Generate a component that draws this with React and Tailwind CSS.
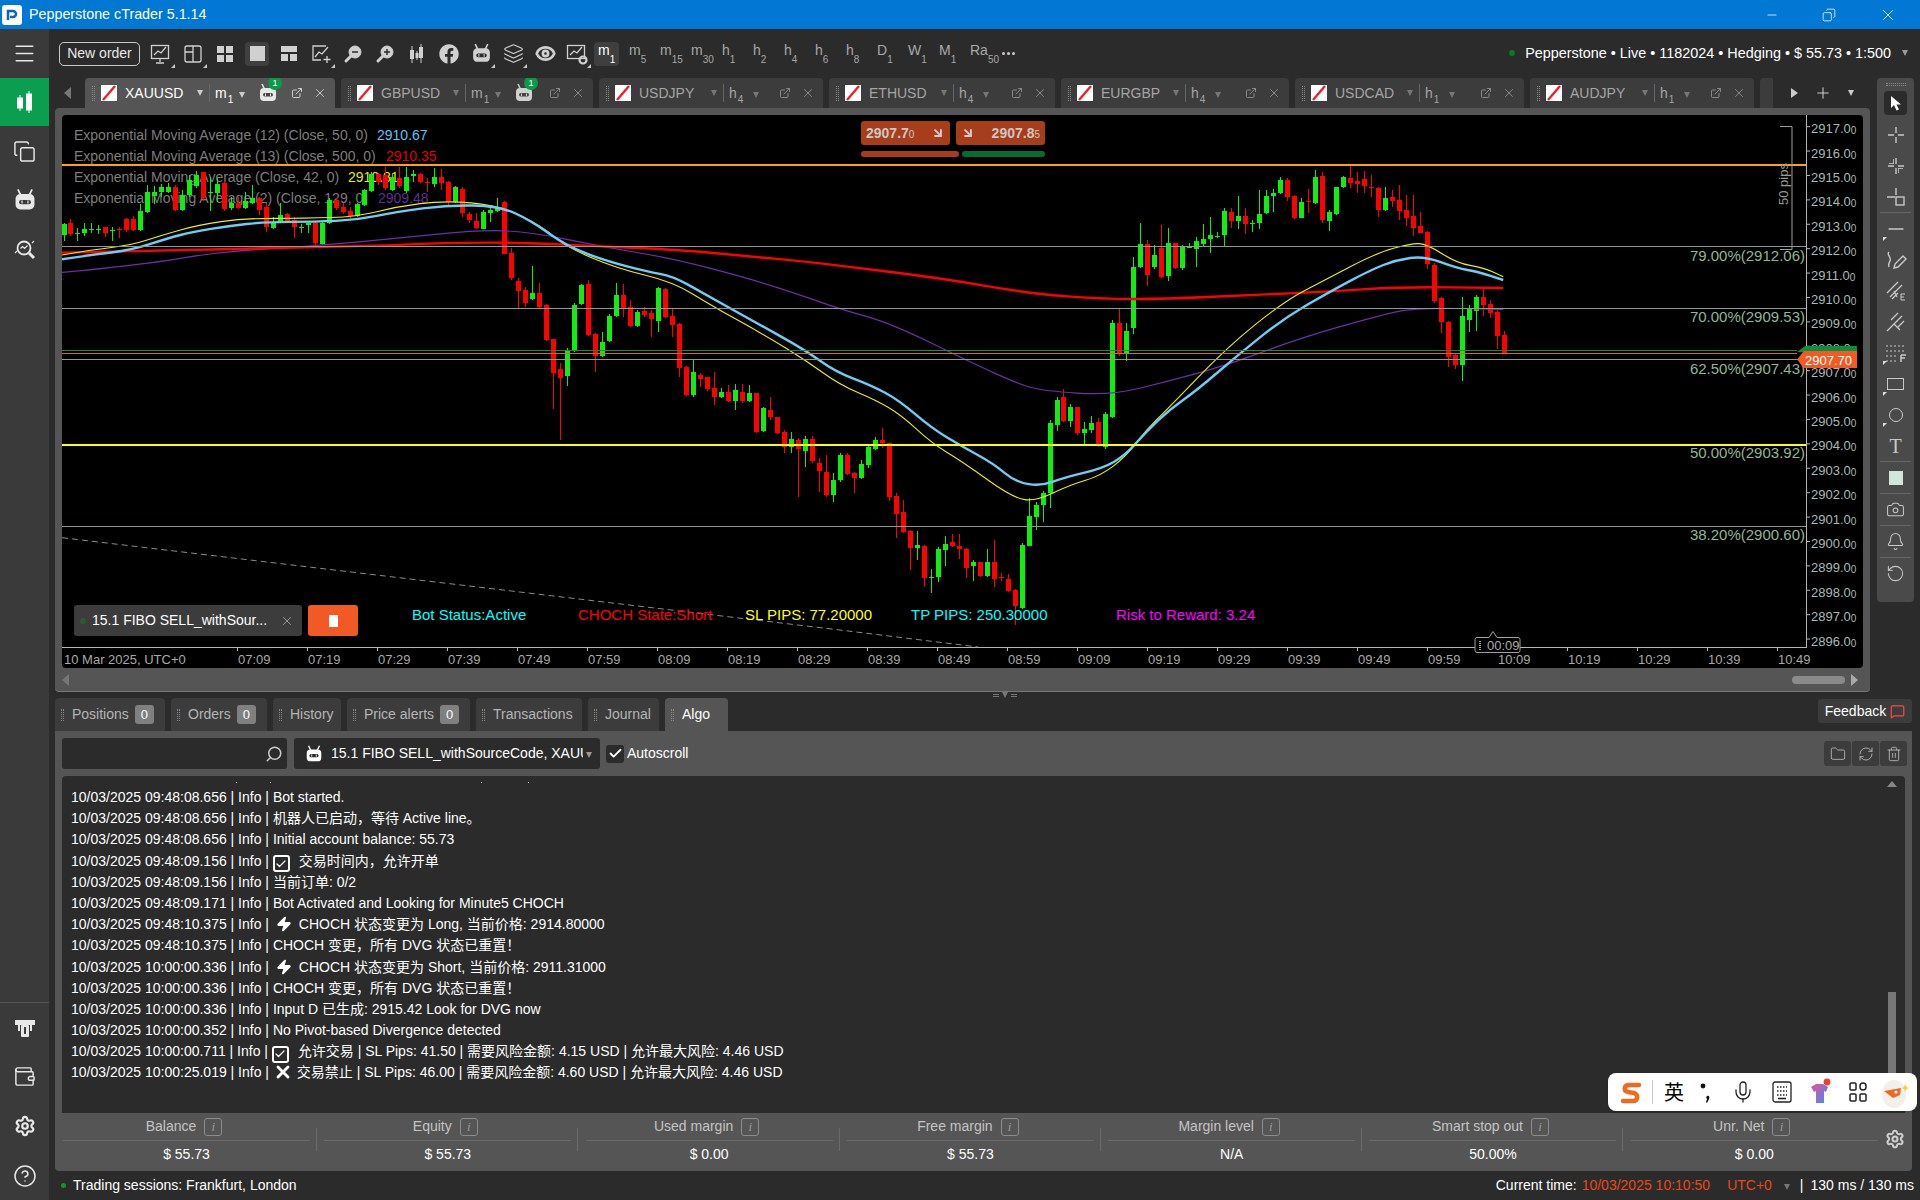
import React from 'react';
import { Menu, Copy, Settings, CircleHelp, Layers, Eye, Folder, RefreshCw, Trash2, Plus, Minus, X, Check, Zap, Mic, Camera, Bell, RotateCcw, ExternalLink, Search, Wallet, MessageSquare, ArrowDownRight } from 'lucide-react';
import { FaFacebook } from 'react-icons/fa';

const g = (t, b, h, l) => ['#0fef0f', t, b, h, l];
const r = (t, b, h, l) => ['#ff0000', t, b, h, l];

// body top, body bottom, high, low - read off the chart, one unit is 1/3 px
const candles = [
  g(342,375,340,392), r(340,372,327,378), g(370,373,355,392), g(358,370,340,378), g(357,359,338,368), g(356,358,345,372), r(352,368,350,382), g(360,363,350,392), r(358,360,350,385), r(327,360,325,367),
  r(326,360,318,364), g(303,360,283,362), g(247,305,225,310), g(245,258,228,282), g(232,245,222,260), g(232,245,220,250), r(232,300,225,302), g(255,300,240,302), g(210,256,195,262), g(195,228,182,235),
  r(187,265,185,272), g(245,250,200,302), g(222,250,205,275), r(218,296,212,303), g(280,295,262,300), r(278,295,262,298), g(272,295,245,298), g(265,278,225,282), r(265,300,262,315), r(292,350,278,365),
  g(336,355,320,358), g(315,335,280,340), r(312,335,310,338), r(330,352,320,385), g(350,352,342,370), g(340,345,335,368), r(340,398,332,408), g(340,402,335,405), g(270,338,265,342), r(270,295,265,300),
  r(291,305,280,312), r(302,318,290,325), g(282,318,278,322), g(240,285,236,288), g(192,243,185,245), r(192,215,188,225), r(195,235,170,240), g(200,240,190,242), r(203,228,170,235), g(202,243,172,248),
  g(192,198,180,215), r(192,215,188,220), r(215,220,205,245), g(202,222,175,232), r(202,220,178,240), r(215,275,212,290), g(232,275,228,280), r(236,308,232,322), r(312,330,305,338), r(332,355,310,358),
  g(306,357,300,358), g(300,310,290,335), g(292,302,265,305), r(276,431,274,432), r(430,505,415,510), r(512,542,505,595), r(540,580,530,590), g(548,567,468,570), r(550,590,520,595), r(585,690,583,692),
  r(688,790,686,896), r(778,803,760,990), g(722,798,715,828), g(585,722,580,725), g(525,582,522,585), r(522,675,510,678), r(672,737,670,785), g(697,737,665,740), g(618,693,612,697), g(556,618,520,620),
  r(556,595,522,620), r(590,647,570,650), g(606,648,600,650), r(603,615,592,620), r(610,628,600,680), g(535,632,530,665), r(537,620,535,625), r(618,645,597,680), r(642,775,640,802), r(770,855,768,858),
  g(785,855,750,860), r(796,808,790,830), r(802,838,800,842), r(835,860,785,885), g(846,860,835,865), r(847,872,825,875), g(840,872,822,900), r(845,872,822,878), g(850,872,824,875), r(850,965,848,968),
  g(895,963,890,965), r(900,920,860,930), r(922,970,920,972), r(967,1010,960,1030), g(987,1010,967,1030), r(990,1018,985,1160), g(987,1022,978,1070), r(987,1053,978,1058), r(1060,1083,1045,1145), r(1087,1155,1035,1160),
  g(1110,1155,1090,1175), g(1035,1110,1030,1115), r(1035,1092,1030,1095), r(1090,1103,1085,1150), g(1063,1105,1050,1108), g(1010,1065,1005,1075), g(990,1017,980,1020), r(990,1000,955,1015), r(1000,1160,998,1173), r(1158,1212,1150,1285),
  r(1205,1265,1170,1268), r(1263,1313,1260,1380), g(1306,1313,1263,1350), r(1308,1403,1306,1430), g(1402,1403,1377,1450), g(1317,1400,1312,1415), g(1302,1320,1278,1367), r(1297,1307,1272,1310), r(1307,1317,1272,1348), r(1317,1373,1315,1405),
  g(1357,1367,1350,1413), r(1357,1398,1355,1400), g(1357,1398,1317,1402), r(1357,1408,1290,1430), r(1402,1403,1388,1412), r(1408,1442,1392,1445), r(1440,1488,1438,1545), g(1305,1495,1298,1497), g(1218,1307,1165,1309), g(1186,1220,1175,1259),
  g(1150,1185,1142,1235), g(938,1150,930,1193), g(870,945,862,962), r(860,932,838,936), g(890,932,882,950), r(892,970,890,975), g(957,970,935,1002), g(940,960,918,968), r(935,1005,925,1010), g(912,1010,905,1016),
  g(640,920,630,925), r(640,730,595,737), g(663,730,640,752), g(472,653,440,673), g(402,472,340,475), r(402,495,390,527), g(435,472,405,478), r(413,500,345,503), g(400,497,355,512), r(400,473,398,478),
  g(412,473,405,480), g(410,412,400,415), g(393,417,380,470), g(388,402,342,408), g(375,387,322,430), g(378,380,365,385), g(303,375,295,410), r(306,333,295,355), g(318,333,258,358), r(318,342,295,372),
  g(340,341,330,365), g(312,340,240,358), g(258,308,240,312), g(248,258,238,305), g(210,250,200,252), r(210,260,205,272), r(258,323,255,328), g(276,323,265,325), r(273,274,238,310), g(201,279,180,281),
  r(198,330,185,340), g(306,333,300,362), g(231,312,230,315), g(201,231,198,234), r(204,218,168,235), r(213,221,185,250), r(207,228,182,250), r(232,234,195,260), r(234,300,230,322), g(264,300,232,302),
  r(261,273,240,290), r(270,303,225,330), r(300,323,255,348), r(318,353,256,378), r(348,369,305,370), r(366,462,364,478), r(465,573,458,580), r(564,636,560,668), r(636,741,632,770), r(735,765,730,777),
  g(618,765,562,812), g(597,630,585,665), g(561,603,555,662), r(561,585,538,618), r(582,609,570,625), r(606,678,600,717), r(675,730,663,732),
];

const sx = (x0, z) => x0 + z * 0.5102;
const sy = (z) => 110 + z / 3;

// points come in two runs, left half and right half of the chart
const line = (a, b) => {
  const p = [...a.map(([x, y]) => [sx(40, x), sy(y)]), ...b.map(([x, y]) => [sx(840, x), sy(y)])];
  let d = `M${p[0][0]} ${p[0][1]}`;
  for (let i = 1; i < p.length - 1; i++) {
    const mx = (p[i][0] + p[i + 1][0]) / 2;
    const my = (p[i][1] + p[i + 1][1]) / 2;
    d += `Q${p[i][0]} ${p[i][1]} ${mx} ${my}`;
  }
  const e = p[p.length - 1];
  return `${d}L${e[0]} ${e[1]}`;
};

const emaBlue = line(
  [[43,448],[100,435],[180,420],[250,385],[300,365],[370,348],[440,336],[540,335],[620,330],[700,305],[800,285],[900,288],[960,330],[1020,395],[1060,425],[1115,455],[1190,485],[1240,498],[1300,550],[1400,635],[1500,720]],
  [[-10,785],[60,825],[115,870],[180,955],[240,1010],[300,1060],[345,1117],[395,1128],[440,1102],[515,1075],[560,1035],[600,965],[645,900],[700,840],[780,735],[870,625],[960,545],[1040,480],[1090,450],[1145,438],[1210,475],[1250,485],[1300,510]]
);
const emaYellow = line(
  [[43,435],[100,420],[180,405],[240,375],[310,345],[400,325],[520,325],[620,320],[700,290],[790,272],[900,285],[985,350],[1030,410],[1130,475],[1240,515],[1320,590],[1420,675],[1500,750]],
  [[0,825],[70,870],[120,915],[180,1000],[240,1055],[340,1165],[385,1173],[450,1125],[510,1098],[560,1040],[600,960],[640,900],[760,710],[870,575],[950,510],[1050,430],[1120,400],[1150,402],[1210,460],[1260,472],[1300,500]]
);
const emaRed = line(
  [[43,428],[220,422],[540,412],[700,405],[800,398],[960,398],[1100,410],[1240,418],[1400,440],[1500,455]],
  [[0,467],[200,505],[370,550],[510,567],[640,567],[800,555],[960,545],[1100,530],[1300,534]]
);
const emaPurple = line(
  [[43,487],[200,465],[350,425],[540,408],[700,385],[860,360],[960,365],[1100,410],[1240,445],[1400,510],[1500,560]],
  [[0,597],[100,640],[260,760],[350,822],[400,843],[530,856],[640,815],[760,765],[900,685],[1060,615],[1130,593],[1300,598]]
);

const prices = Array.from({ length: 22 }, (_, i) => 2917 - i);
const times = ['07:09','07:19','07:29','07:39','07:49','07:59','08:09','08:19','08:29','08:39','08:49','08:59','09:09','09:19','09:29','09:39','09:49','09:59','10:09','10:19','10:29','10:39','10:49'];
const fibs = [
  { y: 246, c: '#8c9a94', label: '79.00%(2912.06)', ty: 261 },
  { y: 308, c: '#8c9a94', label: '70.00%(2909.53)', ty: 322 },
  { y: 359, c: '#8c9a94', label: '62.50%(2907.43)', ty: 374 },
  { y: 444, c: '#ffff00', label: '50.00%(2903.92)', ty: 458 },
  { y: 526, c: '#8c9a94', label: '38.20%(2900.60)', ty: 540 },
];

const legends = [
  ['Exponential Moving Average (12) (Close, 50, 0)', '2910.67', '#5cc4f5', 140, 377],
  ['Exponential Moving Average (13) (Close, 500, 0)', '2910.35', '#e00000', 161, 386],
  ['Exponential Moving Average (Close, 42, 0)', '2910.81', '#e8e800', 182, 348],
  ['Exponential Moving Average (2) (Close, 129, 0)', '2909.48', '#5b2e96', 203, 378],
];

const Chart = () => (
  <svg width="1801" height="553" viewBox="62 115 1801 553" className="block">
    {legends.map(([t, v, c, y, vx]) => (
      <g key={t} fontSize="14">
        <text x="74" y={y} fill="#7d7d7d">{t}</text>
        <text x={vx} y={y} fill={c}>{v}</text>
      </g>
    ))}
    <polyline points="62,537.7 840,630 978,647" fill="none" stroke="#8a8a8a" strokeDasharray="6 4" />
    <g shapeRendering="crispEdges">
      {candles.map(([c, t, b, h, l], i) => {
        const x = Math.round(63.5 + i * 6.993);
        return (
          <g key={i} fill={c}>
            <rect x={x} y={sy(h)} width="1" height={(l - h) / 3} />
            <rect x={x - 2} y={sy(t)} width="5" height={Math.max((b - t) / 3, 1)} />
          </g>
        );
      })}
    </g>
    <path d={emaPurple} fill="none" stroke="#6a30a8" strokeWidth="1.2" />
    <path d={emaRed} fill="none" stroke="#ff0000" strokeWidth="2.4" />
    <path d={emaYellow} fill="none" stroke="#f0f000" strokeWidth="1.1" />
    <path d={emaBlue} fill="none" stroke="#6fcdf5" strokeWidth="2.4" />
    <g shapeRendering="crispEdges">
      <rect x="62" y="163.5" width="1744" height="2" fill="#ffa500" />
      {fibs.map((f) => (
        <rect key={f.y} x="62" y={f.y} width="1744" height={f.c === '#ffff00' ? 2 : 1} fill={f.c} />
      ))}
      <rect x="62" y="350" width="1735" height="1" fill="#0b8f3c" />
      <rect x="62" y="353" width="1735" height="1" fill="#f15a24" />
      <rect x="1806" y="115" width="1" height="533" fill="#b5b5b5" />
      <rect x="62" y="647" width="1745" height="1" fill="#b5b5b5" />
    </g>
    {fibs.map((f) => (
      <text key={f.label} x="1805" y={f.ty} textAnchor="end" fontSize="15" fill="#8fb59a">{f.label}</text>
    ))}
    <path d="M1780 126.500h12v123h-12" fill="none" stroke="#9a9a9a" />
    <text transform="translate(1788 184) rotate(-90)" textAnchor="middle" fontSize="13" fill="#9a9a9a">50 pips</text>
    {prices.map((p) => {
      const y = 246.7 + (2912.06 - p) * 24.4;
      return (
        <g key={p}>
          <rect x="1807" y={y} width="3" height="1" fill="#b5b5b5" />
          <text x="1811" y={y + 7} fontSize="13" fill="#a9b8b8">
            {p}.0<tspan fontSize="10" dy="1">0</tspan>
          </text>
        </g>
      );
    })}
    <path d="M1797 352l8-6h52v10z" fill="#0b8f3c" />
    <path d="M1797 359.500l7-8.500h53v17h-53z" fill="#f15a24" />
    <text x="1805" y="364.500" fontSize="13" fill="#ffffff">2907.70</text>
    <text x="64" y="664" fontSize="13" fill="#a8a8a8">10 Mar 2025, UTC+0</text>
    {times.map((t, i) => (
      <g key={t}>
        <rect x={237 + i * 70} y="648" width="1" height="3" fill="#b5b5b5" />
        <text x={238 + i * 70} y="664" fontSize="13" fill="#a8a8a8">{t}</text>
      </g>
    ))}
    <path d="M1477 637.500h12l4-6 4 6h21a2 2 0 0 1 2 2v11a2 2 0 0 1-2 2h-41a2 2 0 0 1-2-2v-11a2 2 0 0 1 2-2z" fill="#000" stroke="#a0a0a0" />
    <path d="M1480 641v9" stroke="#a0a0a0" strokeDasharray="1 1" strokeWidth="2" />
    <text x="1487" y="650" fontSize="13" fill="#a8a8a8">00:09</text>
  </svg>
);

const Flag = () => (
  <svg width="16" height="16" viewBox="0 0 16 16" className="shrink-0">
    <rect width="16" height="16" fill="#fff" />
    <path d="M2 15 14 1" stroke="#e8212b" strokeWidth="2.4" />
  </svg>
);

const Caret = ({ c = 'border-t-[#999]' }) => (
  <span className={`inline-block w-0 h-0 border-l-[3.5px] border-r-[3.5px] border-t-[6px] border-l-transparent border-r-transparent ${c}`} />
);

const Grip = ({ h = 'h-[15px]' }) => (
  <span className={`w-[3px] ${h} border-x border-dotted border-[#888] shrink-0`} />
);

const BotIcon = ({ s = 22, c = '#fff', eye = '#333' }) => (
  <svg width={s} height={s} viewBox="0 0 22 22">
    <path d="M5 2l2.500 5M17 2l-2.500 5" stroke={c} strokeWidth="1.5" />
    <rect x="3" y="6" width="16" height="13" rx="4" fill={c} />
    <rect x="6" y="11" width="10" height="3.500" rx="1.700" fill={eye} />
    <path d="M8.500 11.500v2.500M13.500 11.500v2.500" stroke={c} />
  </svg>
);

const Tf = ({ a, b, active }) => (
  <div className="w-[31px] h-[24px] shrink-0 pl-[1px]">
    <div className={`w-[25px] h-[24px] rounded flex items-start pl-[4px] pt-[1px] ${active ? 'bg-[#3f3f3f] text-white' : 'text-[#a8a8a8]'}`}>
      <span className="text-[14px] leading-[15px]">{a}</span>
      <span className="text-[10px] leading-[10px] mt-[12px]">{b}</span>
    </div>
  </div>
);

const Tool = ({ children, active, corner }) => (
  <div className="relative w-[32px] h-[34px] shrink-0 flex items-center justify-center text-[#d0d0d0]">
    {active ? <span className="w-[24px] h-[24px] rounded bg-[#3f3f3f] flex items-center justify-center">{children}</span> : children}
    {corner && <span className="absolute right-[2px] bottom-[3px] w-0 h-0 border-l-[4px] border-b-[4px] border-l-transparent border-b-[#ccc]" />}
  </div>
);

const ChartMon = ({ gear }) => (
  <svg width="24" height="24" viewBox="0 0 24 24" fill="none" stroke="currentColor" strokeWidth="1.3">
    <rect x="2.500" y="3.500" width="17" height="13" />
    <path d="M5 13l4-4 3 2 5-6" />
    {gear ? <circle cx="18" cy="18" r="3.500" strokeWidth="2.2" /> : <path d="M11 17v3M7 21h8" />}
  </svg>
);

const Toolbar = () => (
  <div className="h-[49px] flex items-center pl-[10px] shrink-0">
    <div className="w-[81px] h-[24px] rounded-[5px] border border-[#c8c8c8] text-[#e8e8e8] text-[14px] flex items-center justify-center mr-[5px] shrink-0">New order</div>
    <Tool corner><ChartMon /></Tool>
    <Tool corner>
      <svg width="22" height="22" viewBox="0 0 22 22" fill="none" stroke="currentColor" strokeWidth="1.3"><rect x="3" y="3" width="16" height="16" rx="2" /><path d="M3 9h8M11 3v16" /></svg>
    </Tool>
    <Tool>
      <div className="grid grid-cols-2 gap-[2px]">
        <span className="w-[7px] h-[7px] bg-[#d0d0d0]" /><span className="w-[7px] h-[7px] bg-[#d0d0d0]" />
        <span className="w-[7px] h-[7px] bg-[#d0d0d0]" /><span className="w-[7px] h-[7px] bg-[#d0d0d0]" />
      </div>
    </Tool>
    <Tool active><span className="w-[15px] h-[15px] bg-[#d0d0d0]" /></Tool>
    <Tool>
      <div className="grid grid-cols-2 gap-[2px]">
        <span className="col-span-2 w-[16px] h-[6px] bg-[#d0d0d0]" />
        <span className="w-[7px] h-[7px] bg-[#d0d0d0]" /><span className="w-[7px] h-[7px] bg-[#d0d0d0]" />
      </div>
    </Tool>
    <Tool corner>
      <svg width="22" height="22" viewBox="0 0 22 22" fill="none" stroke="currentColor" strokeWidth="1.3"><path d="M16 3H3v14h8" /><path d="M5 14l4-5 3 2 6-7" /><path d="M17 13v7M13.500 16.500h7" /></svg>
    </Tool>
    {[false, true].map((p) => (
      <Tool key={String(p)}>
        <svg width="20" height="20" viewBox="0 0 20 20" fill="none" stroke="currentColor"><circle cx="12" cy="8" r="6" fill="currentColor" /><path d="M8 12l-5 5" strokeWidth="3" strokeLinecap="round" /><path d={p ? 'M9 8h6M12 5v6' : 'M9 8h6'} stroke="#2b2b2b" strokeWidth="1.5" /></svg>
      </Tool>
    ))}
    <Tool>
      <svg width="24" height="24" viewBox="0 0 24 24" fill="currentColor"><path d="M7 4v17M16 2v19M12 9v9" stroke="currentColor" /><rect x="5" y="8" width="4" height="9" /><rect x="14" y="5" width="4" height="11" /><rect x="10.500" y="11" width="3" height="5" /></svg>
    </Tool>
    <Tool><FaFacebook size={20} /></Tool>
    <Tool corner><BotIcon s={23} c="#d0d0d0" eye="#2b2b2b" /></Tool>
    <Tool corner><Layers size={21} strokeWidth={1.3} /></Tool>
    <Tool><Eye size={21} strokeWidth={3} /></Tool>
    <Tool corner><ChartMon gear /></Tool>
    <Tf a="m" b="1" active />
    <Tf a="m" b="5" />
    <Tf a="m" b="15" />
    <Tf a="m" b="30" />
    <Tf a="h" b="1" />
    <Tf a="h" b="2" />
    <Tf a="h" b="4" />
    <Tf a="h" b="6" />
    <Tf a="h" b="8" />
    <Tf a="D" b="1" />
    <Tf a="W" b="1" />
    <Tf a="M" b="1" />
    <Tf a="Ra" b="50" />
    <span className="flex gap-[2px] ml-[6px]">
      <span className="w-[3px] h-[3px] rounded-full bg-[#ccc]" /><span className="w-[3px] h-[3px] rounded-full bg-[#ccc]" /><span className="w-[3px] h-[3px] rounded-full bg-[#ccc]" />
    </span>
    <div className="ml-auto flex items-center pr-[12px] text-white text-[14.4px]">
      <span className="w-[6px] h-[6px] rounded-full bg-[#0a7a1f] mr-[10px]" />
      <span className="mr-[11px]">Pepperstone • Live • 1182024 • Hedging • $ 55.73 • 1:500</span>
      <Caret />
    </div>
  </div>
);

const tabs = [
  { n: 'XAUUSD', tf: 'm', s: '1', w: 'w-[250px]', bot: true, active: true },
  { n: 'GBPUSD', tf: 'm', s: '1', w: 'w-[252px]', bot: true },
  { n: 'USDJPY', tf: 'h', s: '4', w: 'w-[224px]' },
  { n: 'ETHUSD', tf: 'h', s: '4', w: 'w-[226px]' },
  { n: 'EURGBP', tf: 'h', s: '4', w: 'w-[228px]' },
  { n: 'USDCAD', tf: 'h', s: '1', w: 'w-[229px]' },
  { n: 'AUDJPY', tf: 'h', s: '1', w: 'w-[224px]' },
];

const SymbolTab = ({ t }) => (
  <div className={`${t.w} h-[30px] shrink-0 rounded-t-[4px] flex items-center pl-[7px] pr-[8px] ${t.active ? 'bg-[#555555] text-white' : 'bg-[#3c3c3c] text-[#a5a5a5]'}`}>
    <Grip />
    <span className="ml-[6px]"><Flag /></span>
    <span className="ml-[8px] w-[72px] text-[14px]">{t.n}</span>
    <Caret c={t.active ? 'border-t-[#ccc]' : 'border-t-[#777]'} />
    <span className="ml-[6px] w-[1px] h-[18px] bg-[#666]" />
    <span className="ml-[5px] flex items-center w-[22px] h-[24px]">
      <span className="text-[14px] leading-[14px] mt-[-1px]">{t.tf}</span>
      <span className="text-[10px] leading-[10px] mt-[13px] ml-[1px]">{t.s}</span>
    </span>
    <span className="ml-[2px]"><Caret c={t.active ? 'border-t-[#ccc]' : 'border-t-[#777]'} /></span>
    {t.bot && (
      <span className="relative ml-[12px]">
        <BotIcon s={22} c={t.active ? '#e8e8e8' : '#d0d0d0'} eye="#444" />
        <span className="absolute left-[11px] top-[-6px] w-[14px] h-[14px] rounded-full bg-[#0a9a4a] text-white text-[9px] leading-[14px] text-center">1</span>
      </span>
    )}
    <span className="ml-auto mr-[10px]"><ExternalLink size={12} color={t.active ? '#ccc' : '#888'} /></span>
    <X size={14} strokeWidth={1.4} color={t.active ? '#ddd' : '#999'} />
  </div>
);

const Cross = ({ dbl }) => (
  <svg width="24" height="24" viewBox="0 0 24 24" stroke="#c8c8c8" strokeWidth="1.4" fill="none">
    <path d="M12 4v6M12 14v6M4 12h6M14 12h6" />
    {dbl && <path d="M9.500 5v5M14.500 14v5M5 9.500h5M14 14.500h5" strokeWidth="0.8" />}
  </svg>
);

const RTool = ({ children, corner }) => (
  <div className="relative w-[31px] h-[31px] flex items-center justify-center text-[#c8c8c8] shrink-0">
    {children}
    {corner && <span className="absolute left-[3px] bottom-[3px] w-0 h-0 border-r-[4px] border-b-[4px] border-r-transparent border-b-[#ddd] rotate-90" />}
  </div>
);

const RSep = () => <div className="w-[31px] h-[1px] bg-[#666] shrink-0" />;

const RightTools = () => (
  <div className="w-[37px] h-[524px] ml-[7px] rounded-[4px] bg-[#4a4a4a] flex flex-col items-center pt-[5px] shrink-0">
    <div className="w-[20px] h-[3px] border-y border-dotted border-[#888]" />
    <div className="w-[23px] h-[24px] mt-[5px] mb-[4px] rounded bg-[#2b2b2b] flex items-center justify-center shrink-0">
      <svg width="12" height="17" viewBox="0 0 12 17" fill="#fff"><path d="M1 1v12l3-3 2.500 5.500 2.500-1L6.500 9.500H11z" /></svg>
    </div>
    <RTool><Cross /></RTool>
    <RTool><Cross dbl /></RTool>
    <RTool>
      <svg width="24" height="24" viewBox="0 0 24 24" stroke="#c8c8c8" strokeWidth="1.4" fill="none"><path d="M3 12h8M12 3v7" /><rect x="12" y="12" width="8" height="8" /></svg>
    </RTool>
    <RSep />
    <RTool corner><Minus size={24} strokeWidth={1.4} /></RTool>
    <RTool>
      <svg width="24" height="24" viewBox="0 0 24 24" stroke="#c8c8c8" strokeWidth="1.4" fill="none"><path d="M5 4c-3 3 3 5 1 9-1 2-2 3-1 6" /><path d="M10 20l1-4 8-8 3 3-8 8z" /></svg>
    </RTool>
    <RTool>
      <svg width="24" height="24" viewBox="0 0 24 24" stroke="#c8c8c8" strokeWidth="1.300" fill="none"><path d="M3 14L14 3M6 18L18 6M8 20l6-6M10 12l3 6" /><path d="M17 15h4M17 15v6h4M17 18h3" strokeWidth="1" /></svg>
    </RTool>
    <RTool>
      <svg width="24" height="24" viewBox="0 0 24 24" stroke="#c8c8c8" strokeWidth="1.300" fill="none"><path d="M3 21l7-7M10 14L18 6M10 14l6 6M7 10l7-7M13 18l7-7" /></svg>
    </RTool>
    <RTool corner>
      <svg width="24" height="24" viewBox="0 0 24 24" stroke="#c8c8c8" fill="none"><path d="M2 5h20M2 10h20M2 15h12M2 20h12" strokeDasharray="2 2" /><path d="M17 14h5M17 14v7M17 17h4" strokeWidth="1.500" /></svg>
    </RTool>
    <RTool corner><span className="w-[17px] h-[12px] border-[1.5px] border-[#c8c8c8]" /></RTool>
    <RTool corner><span className="w-[14px] h-[14px] rounded-full border-[1.5px] border-[#c8c8c8]" /></RTool>
    <RTool><span className="font-['Liberation_Serif',serif] text-[20px] text-[#c8c8c8]">T</span></RTool>
    <RSep />
    <RTool><span className="w-[14px] h-[14px] bg-[#cfe6dc]" /></RTool>
    <RSep />
    <RTool><Camera size={19} strokeWidth={1.3} /></RTool>
    <RSep />
    <RTool><Bell size={19} strokeWidth={1.3} /></RTool>
    <RSep />
    <RTool><RotateCcw size={19} strokeWidth={1.3} /></RTool>
  </div>
);

const BottomTab = ({ label, n, w, active }) => (
  <div className={`${w} h-[33px] shrink-0 rounded-t-[4px] flex items-center pl-[6px] text-[14px] ${active ? 'bg-[#555555] text-white' : 'bg-[#3c3c3c] text-[#b5b5b5]'}`}>
    <Grip h="h-[12px]" />
    <span className="ml-[8px]">{label}</span>
    {n !== undefined && <span className="ml-[6px] w-[19px] h-[19px] rounded-[3px] bg-[#808080] text-white text-[13px] text-center leading-[19px]">{n}</span>}
  </div>
);

const Chk = () => <span className="inline-flex align-[-4px] w-[17px] h-[17px] mr-[5px] border-2 border-white rounded-[3px] items-center justify-center"><Check size={12} strokeWidth={2.6} color="#fff" /></span>;
const Bolt = () => <Zap size={16} fill="#fff" color="#fff" className="inline align-[-3px] ml-[3px] mr-[3px]" />;
const Cross2 = () => <X size={20} strokeWidth={3.4} color="#fff" className="inline align-[-5px]" />;

const logRows = [
  ['10/03/2025 09:48:08.656 | Info | ', 'Bot started.'],
  ['10/03/2025 09:48:08.656 | Info | ', '机器人已启动，等待 Active line。'],
  ['10/03/2025 09:48:08.656 | Info | ', 'Initial account balance: 55.73'],
  ['10/03/2025 09:48:09.156 | Info | ', <><Chk /> 交易时间内，允许开单</>],
  ['10/03/2025 09:48:09.156 | Info | ', '当前订单: 0/2'],
  ['10/03/2025 09:48:09.171 | Info | ', 'Bot Activated and Looking for Minute5 CHOCH'],
  ['10/03/2025 09:48:10.375 | Info | ', <><Bolt /> CHOCH 状态变更为 Long, 当前价格: 2914.80000</>],
  ['10/03/2025 09:48:10.375 | Info | ', 'CHOCH 变更，所有 DVG 状态已重置！'],
  ['10/03/2025 10:00:00.336 | Info | ', <><Bolt /> CHOCH 状态变更为 Short, 当前价格: 2911.31000</>],
  ['10/03/2025 10:00:00.336 | Info | ', 'CHOCH 变更，所有 DVG 状态已重置！'],
  ['10/03/2025 10:00:00.336 | Info | ', 'Input D 已生成: 2915.42 Look for DVG now'],
  ['10/03/2025 10:00:00.352 | Info | ', 'No Pivot-based Divergence detected'],
  ['10/03/2025 10:00:00.711 | Info | ', <><Chk /> 允许交易 | SL Pips: 41.50 | 需要风险金额: 4.15 USD | 允许最大风险: 4.46 USD</>],
  ['10/03/2025 10:00:25.019 | Info | ', <><Cross2 /> 交易禁止 | SL Pips: 46.00 | 需要风险金额: 4.60 USD | 允许最大风险: 4.46 USD</>],
];

const stats = [
  ['Balance', '$ 55.73'], ['Equity', '$ 55.73'], ['Used margin', '$ 0.00'], ['Free margin', '$ 55.73'],
  ['Margin level', 'N/A'], ['Smart stop out', '50.00%'], ['Unr. Net', '$ 0.00'],
];

const Stat = ({ label, value, last }) => (
  <div className="w-[261.3px] shrink-0 flex">
    <div className="w-[247px] shrink-0 flex flex-col">
      <div className="h-[27px] flex items-center justify-center pr-[5px] text-[14px] text-[#c4c4c4]">
        {label}
        <span className="ml-[8px] w-[18px] h-[18px] border border-[#8c8c8c] rounded-[3px] text-[13px] italic leading-[16px] text-center font-['Liberation_Serif',serif] text-[#9a9a9a]">i</span>
      </div>
      <div className="h-[1px] bg-[#6a6a6a]" />
      <div className="h-[26px] flex items-center justify-center text-[14px] text-white">{value}</div>
    </div>
    {!last && <span className="ml-[6px] mt-[15px] w-[1px] h-[23px] bg-[#6a6a6a]" />}
  </div>
);

const ImeBar = () => (
  <div className="absolute left-[1608px] top-[1073px] w-[309px] h-[38px] rounded-[8px] bg-white shadow flex items-center z-10 text-black">
    <svg width="24" height="24" viewBox="0 0 24 24" fill="none" stroke="#f06a1d" strokeWidth="4.4" className="ml-[11px] shrink-0" strokeLinecap="round"><path d="M20 5H10C5 5 4 11 9 12l6 1c5 1 4 8-1 8H4" /></svg>
    <span className="w-[1px] h-[24px] bg-[#ccc] ml-[9px]" />
    <span className="ml-[11px] text-[20px] font-['Noto_Sans_CJK_SC',sans-serif] leading-none">英</span>
    <svg width="14" height="22" viewBox="0 0 14 22" fill="#111" className="ml-[15px] shrink-0"><circle cx="4" cy="5" r="2.400" /><path d="M8 15c2-1 3 1 2 3l-2 4-1-1 1-3c-1-1-1-2 0-3z" /></svg>
    <Mic size={24} strokeWidth={1.3} color="#222" className="ml-[18px] shrink-0" />
    <svg width="22" height="24" viewBox="0 0 22 24" fill="none" stroke="#222" strokeWidth="1.300" className="ml-[16px] shrink-0"><rect x="2" y="2" width="18" height="20" rx="2" /><path d="M6 7h10M6 11h10M6 15h10" strokeDasharray="1.500 1.500" strokeWidth="1.500" /><path d="M7 18.500h8" strokeWidth="1.600" /></svg>
    <svg width="26" height="28" viewBox="0 0 26 28" className="ml-[15px] shrink-0"><defs><linearGradient id="sh" x1="0" y1="0" x2="1" y2="1"><stop offset="0" stopColor="#f0508c" /><stop offset="1" stopColor="#3d8cff" /></linearGradient></defs><path d="M3 9l5-3h7l5 3-2 5-2-1v12H8V13l-2 1z" fill="url(#sh)" /><circle cx="19" cy="4" r="3.400" fill="#f0402a" /></svg>
    <svg width="20" height="22" viewBox="0 0 20 22" fill="none" stroke="#222" strokeWidth="1.500" className="ml-[14px] shrink-0"><rect x="2" y="2" width="6" height="7" rx="1" /><rect x="12" y="2" width="6" height="7" rx="3" /><rect x="2" y="13" width="6" height="7" rx="1" /><rect x="12" y="13" width="6" height="7" rx="1" /></svg>
    <svg width="28" height="34" viewBox="0 0 28 34" className="ml-[13px] shrink-0"><ellipse cx="13" cy="19" rx="12" ry="14" fill="#f3f0ec" /><path d="M3 16l17-3-1 7-7 3z" fill="#f06a1d" /><circle cx="15" cy="17" r="1.500" fill="#fff" /><path d="M24 9l1.500 3 2.500 1-2.500 1-1.500 3-1-3-2-1 2-1z" fill="#f5d23c" /></svg>
  </div>
);

export default function App() {
  return (
    <div className="relative w-[1920px] h-[1200px] overflow-hidden flex flex-col bg-[#2b2b2b] font-['Liberation_Sans','Noto_Sans_CJK_SC',sans-serif]">
      <div className="h-[29px] shrink-0 bg-[#0078d4] flex items-center text-white text-[14.3px]">
        <svg width="20" height="20" viewBox="0 0 20 20" className="ml-[2px]">
          <rect width="20" height="20" rx="3" fill="#fff" />
          <path d="M6 15V6h5a3 3 0 0 1 0 6H8" fill="none" stroke="#0b62c4" strokeWidth="2.500" />
        </svg>
        <span className="ml-[7px]">Pepperstone cTrader 5.1.14</span>
        <div className="ml-auto flex items-center pr-[23px] gap-[43px]">
          <Minus size={14} strokeWidth={1.3} />
          <Copy size={14} strokeWidth={1.3} className="-scale-x-100" />
          <X size={18} strokeWidth={1.1} />
        </div>
      </div>

      <div className="flex-1 flex min-h-0">
        <div className="w-[49px] shrink-0 bg-[#3a3a3a] flex flex-col items-center text-[#e8e8e8]">
          <div className="h-[49px] flex items-center justify-center"><Menu size={25} strokeWidth={1.3} /></div>
          <div className="h-[48px] w-full bg-[#0a9e50] flex items-center justify-center">
            <svg width="22" height="26" viewBox="0 0 22 26" fill="#fff" stroke="#fff"><path d="M6 6v16M15 2v22" /><rect x="3.500" y="9" width="5" height="10" /><rect x="12.500" y="5" width="5" height="16" /></svg>
          </div>
          <div className="h-[50px] flex items-center justify-center"><Copy size={23} strokeWidth={1.5} /></div>
          <div className="h-[48px] flex items-center justify-center"><BotIcon s={26} c="#e8e8e8" eye="#3a3a3a" /></div>
          <div className="h-[50px] flex items-center justify-center">
            <svg width="24" height="24" viewBox="0 0 24 24" fill="none" stroke="#e8e8e8" strokeWidth="1.800"><circle cx="11" cy="11" r="6.500" /><path d="M16 16l5 5" strokeWidth="3" /><path d="M7.500 11.500l2-2 2 2 3-3" strokeWidth="1.200" /><path d="M2 16l2-2M19 6l2-2" strokeWidth="1.200" /></svg>
          </div>
          <div className="mt-auto w-full border-t border-[#555] flex flex-col items-center">
            <div className="h-[49px] w-full flex items-center justify-center">
              <svg width="22" height="22" viewBox="0 0 22 22" fill="#e8e8e8"><rect x="1" y="3" width="20" height="5" /><path d="M4 8h2v6H4zM16 8h2v6h-2z" /><rect x="7" y="8" width="8" height="12" rx="1" /><rect x="10" y="10" width="2" height="7" fill="#3a3a3a" /></svg>
            </div>
            <div className="h-[49px] flex items-center justify-center"><Wallet size={23} strokeWidth={1.5} /></div>
            <div className="h-[50px] flex items-center justify-center"><Settings size={22} strokeWidth={2.4} /></div>
            <div className="h-[49px] flex items-center justify-center"><CircleHelp size={24} strokeWidth={1.5} /></div>
          </div>
        </div>

        <div className="flex-1 min-w-0 flex flex-col">
          <Toolbar />
          <div className="flex shrink-0">
            <div className="w-[1821px] shrink-0 pl-[6px]">
              <div className="h-[30px] flex items-center gap-[6px] overflow-hidden">
                <div className="w-[24px] shrink-0 pl-[9px]"><span className="block w-0 h-0 border-y-[6px] border-r-[7px] border-y-transparent border-r-[#777]" /></div>
                {tabs.map((t) => <SymbolTab key={t.n} t={t} />)}
                <div className="w-[13px] h-[30px] shrink-0 rounded-tl-[4px] bg-[#3c3c3c]" />
                <div className="flex items-center shrink-0 pl-[12px] gap-[16px]">
                  <span className="w-0 h-0 border-y-[5px] border-l-[7px] border-y-transparent border-l-[#ccc]" />
                  <Plus size={18} strokeWidth={1.4} color="#ccc" />
                  <Caret c="border-t-[#ccc]" />
                </div>
              </div>
              <div className="h-[584px] w-[1815px] rounded-[4px] bg-[#555555] border-b border-[#777] pt-[7px] pl-[7px] pr-[7px]">
                <div className="relative w-[1801px] h-[553px] rounded-[4px] bg-black overflow-hidden">
                  <Chart />
                  <div className="absolute left-[799px] top-[6px] flex gap-[6px]">
                    <div className="w-[89px] h-[24px] rounded-[3px] bg-[#a83d1a] flex items-center justify-between px-[5px] text-[#c8c8c8] text-[14px] font-bold">
                      <span>2907.7<span className="text-[10px] font-normal">0</span></span>
                      <ArrowDownRight size={14} strokeWidth={3.4} color="#ccc" />
                    </div>
                    <div className="w-[89px] h-[24px] rounded-[3px] bg-[#a83d1a] flex items-center justify-between px-[5px] text-[#c8c8c8] text-[14px] font-bold">
                      <ArrowDownRight size={14} strokeWidth={3.4} color="#ccc" />
                      <span>2907.8<span className="text-[10px] font-normal">5</span></span>
                    </div>
                  </div>
                  <div className="absolute left-[799px] top-[36px] flex gap-[3px]">
                    <span className="w-[98px] h-[6px] rounded-full bg-[#a83d1a]" />
                    <span className="w-[83px] h-[6px] rounded-full bg-[#0a6b32]" />
                  </div>
                  <div className="absolute left-[12px] top-[490px] flex gap-[6px]">
                    <div className="w-[228px] h-[31px] rounded-[3px] bg-[#3c3c3c] flex items-center text-[14px] text-white pl-[6px] pr-[8px]">
                      <span className="w-[6px] h-[6px] rounded-full bg-[#2d5a2d] mr-[6px]" />
                      <span>15.1 FIBO SELL_withSour...</span>
                      <X size={14} strokeWidth={1.4} color="#aaa" className="ml-auto" />
                    </div>
                    <div className="w-[50px] h-[31px] rounded-[3px] bg-[#f15a24] flex items-center justify-center">
                      <span className="w-[9px] h-[12px] bg-white" />
                    </div>
                  </div>
                  <div className="absolute left-[350px] top-[489px] text-[15px] text-[#00ffff]">Bot Status:Active</div>
                  <div className="absolute left-[516px] top-[489px] text-[15px] text-[#ff0000]">CHOCH State:Short</div>
                  <div className="absolute left-[683px] top-[489px] text-[15px] text-[#ffff00]">SL PIPS: 77.20000</div>
                  <div className="absolute left-[849px] top-[489px] text-[15px] text-[#00ffff]">TP PIPS: 250.30000</div>
                  <div className="absolute left-[1054px] top-[489px] text-[15px] text-[#ff00ff]">Risk to Reward: 3.24</div>
                </div>
                <div className="h-[23px] flex items-center">
                  <span className="w-0 h-0 border-y-[6px] border-r-[7px] border-y-transparent border-r-[#777]" />
                  <span className="ml-auto w-[53px] h-[8px] rounded-full bg-[#8a8a8a]" />
                  <span className="ml-[6px] mr-[5px] w-0 h-0 border-y-[6px] border-l-[7px] border-y-transparent border-l-[#aaa]" />
                </div>
              </div>
            </div>
            <RightTools />
          </div>

          <div className="h-[6px] shrink-0 flex items-center justify-center gap-[3px] pl-[40px]">
            <span className="w-[6px] h-[3px] border-y border-[#777]" />
            <Caret c="border-t-[#777]" />
            <span className="w-[6px] h-[3px] border-y border-[#777]" />
          </div>

          <div className="h-[33px] shrink-0 flex gap-[6px] pl-[6px] pr-[8px]">
            <BottomTab label="Positions" n="0" w="w-[110px]" />
            <BottomTab label="Orders" n="0" w="w-[96px]" />
            <BottomTab label="History" w="w-[68px]" />
            <BottomTab label="Price alerts" n="0" w="w-[123px]" />
            <BottomTab label="Transactions" w="w-[106px]" />
            <BottomTab label="Journal" w="w-[71px]" />
            <BottomTab label="Algo" w="w-[63px]" active />
            <div className="ml-auto mt-[1px] w-[94px] h-[24px] rounded-[3px] bg-[#3c3c3c] flex items-center justify-center gap-[4px] text-white text-[14px]">
              Feedback <MessageSquare size={15} color="#f04a4a" />
            </div>
          </div>

          <div className="h-[440px] shrink-0 ml-[6px] mr-[8px] rounded-b-[4px] bg-[#555555] px-[7px] flex flex-col">
            <div className="h-[45px] shrink-0 flex items-center gap-[7px]">
              <div className="w-[225px] h-[31px] rounded-[3px] bg-[#2b2b2b] flex items-center justify-end pr-[4px]"><Search size={18} color="#ccc" className="-scale-x-100" /></div>
              <div className="w-[306px] h-[31px] rounded-[3px] bg-[#2b2b2b] flex items-center pl-[10px] text-white text-[14px]">
                <BotIcon s={20} c="#fff" eye="#2b2b2b" />
                <span className="ml-[7px] w-[252px] overflow-hidden whitespace-nowrap">15.1 FIBO SELL_withSourceCode, XAUUSD</span>
                <span className="ml-[3px]"><Caret /></span>
              </div>
              <div className="w-[18px] h-[18px] ml-[-1px] rounded-[3px] bg-[#2b2b2b] flex items-center justify-center"><Check size={15} strokeWidth={3} color="#fff" /></div>
              <span className="ml-[-4px] text-white text-[14px]">Autoscroll</span>
              <div className="ml-auto flex gap-[1px] mr-[-2px]">
                {[Folder, RefreshCw, Trash2].map((I, i) => (
                  <span key={i} className="w-[27px] h-[25px] rounded-[3px] bg-[#3c3c3c] flex items-center justify-center"><I size={16} strokeWidth={1.3} color="#bbb" /></span>
                ))}
              </div>
            </div>
            <div className="relative h-[337px] shrink-0 rounded-t-[4px] bg-[#2b2b2b] pl-[9px] pt-[11px] text-[14px] text-white">
              {logRows.map(([a, b], i) => (
                <div key={i} className="h-[21.2px] leading-[21px] whitespace-nowrap">{a}{b}</div>
              ))}
              <span className="absolute left-[174px] top-[6px] w-[1px] h-[1px] bg-[#ddd]" />
              <span className="absolute left-[208px] top-[6px] w-[1px] h-[1px] bg-[#ddd]" />
              <span className="absolute left-[419px] top-[6px] w-[1px] h-[1px] bg-[#ddd]" />
              <span className="absolute left-[466px] top-[6px] w-[1px] h-[1px] bg-[#ddd]" />
              <span className="absolute right-[8px] top-[5px] w-0 h-0 border-x-[5px] border-b-[6px] border-x-transparent border-b-[#888]" />
              <span className="absolute right-[9px] top-[216px] bottom-[36px] w-[8px] bg-[#777]" />
            </div>
            <div className="flex-1 flex items-start pl-[1px]">
              {stats.map(([l, v], i) => <Stat key={l} label={l} value={v} last={i === 6} />)}
              <Settings size={20} strokeWidth={2.4} color="#d0d0d0" className="shrink-0 ml-[-7px] mt-[16px]" />
            </div>
          </div>

          <div className="flex-1 flex items-center text-[14px] text-white pl-[12px] pr-[6px]">
            <span className="w-[5px] h-[5px] rounded-full bg-[#0a9a2a] mr-[7px]" />
            Trading sessions: Frankfurt, London
            <div className="ml-auto flex items-center">
              <span>Current time:</span>
              <span className="ml-[5px] text-[#e8481c]">10/03/2025 10:10:50</span>
              <span className="ml-[17px] text-[#e8481c]">UTC+0</span>
              <span className="ml-[12px]"><Caret c="border-t-[#777]" /></span>
              <span className="ml-[10px]">|</span>
              <span className="ml-[7px]">130 ms / 130 ms</span>
            </div>
          </div>
        </div>
      </div>
      <ImeBar />
    </div>
  );
}
